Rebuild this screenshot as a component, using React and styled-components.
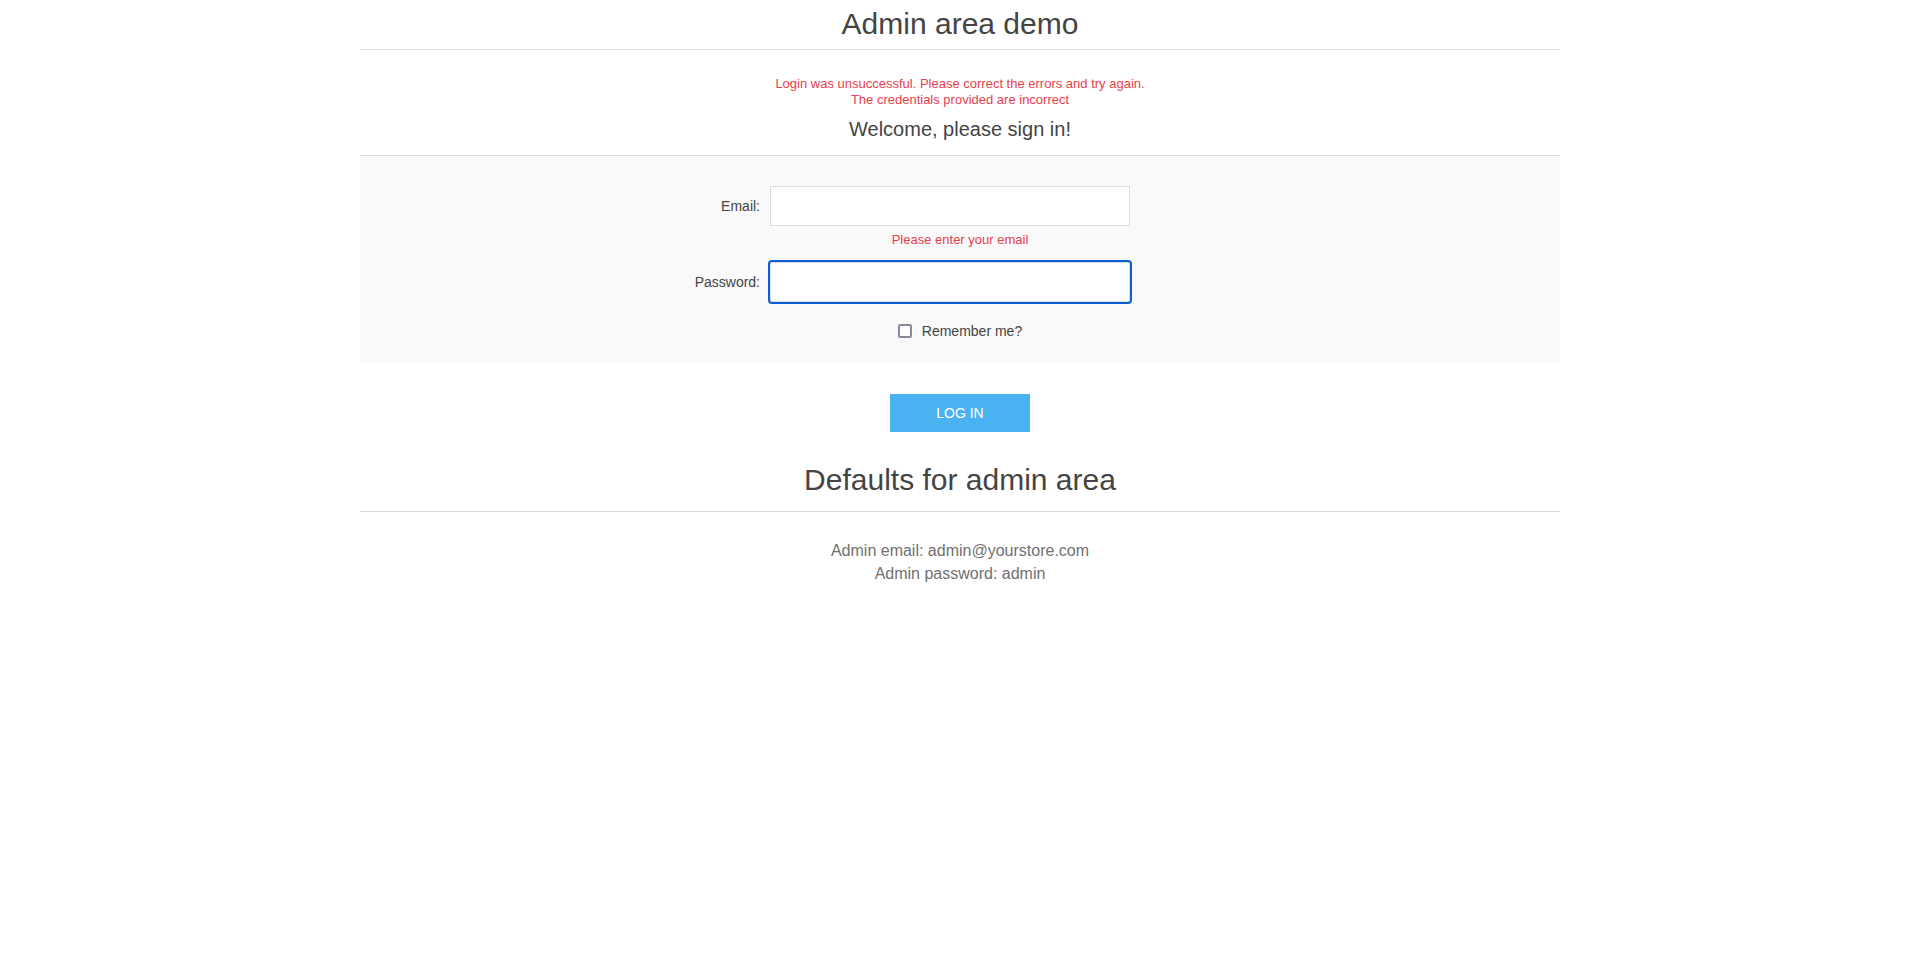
import React from "react";
import styled, { createGlobalStyle } from "styled-components";

const GlobalStyle = createGlobalStyle`
	body {
		margin: 0;
		background: #fff;
		font-family: "Liberation Sans", Arial, sans-serif;
		color: #444;
	}
`;

const Page = styled.div`
	width: 1200px;
	margin: 0 auto;
`;

const Title = styled.h1`
	margin: 0;
	padding: 7px 0 ${(p) => (p.$spaced ? "15px" : "9px")};
	margin-top: ${(p) => (p.$spaced ? "24px" : "0")};
	font-size: 30px;
	line-height: 33px;
	font-weight: normal;
	text-align: center;
	color: #444;
	border-bottom: 1px solid #ddd;
`;

const Errors = styled.div`
	margin-top: 26px;
	font-size: 13px;
	line-height: 16px;
	text-align: center;
	color: #e8404c;
`;

const Welcome = styled.div`
	margin-top: 10px;
	padding-bottom: 15px;
	font-size: 20px;
	line-height: 22px;
	text-align: center;
	color: #444;
	border-bottom: 1px solid #ddd;
`;

const Panel = styled.div`
	background: #f9f9f9;
	padding: 30px 0 23px;
`;

const FieldRow = styled.div`
	display: grid;
	grid-template-columns: 400px 360px;
	column-gap: 10px;
	align-items: center;
	margin-top: ${(p) => p.$top || 0}px;
`;

const Label = styled.label`
	font-size: 14px;
	text-align: right;
	color: #444;
`;

const Input = styled.input`
	box-sizing: border-box;
	width: 360px;
	height: 40px;
	padding: 0 10px;
	border: 1px solid #dcdcdc;
	background: #fff;
	font-family: inherit;
	font-size: 14px;
	outline: ${(p) => (p.$focused ? "2px solid #0c5fd3" : "none")};
	border-radius: ${(p) => (p.$focused ? "2px" : "0")};
`;

const FieldError = styled.div`
	margin-top: 6px;
	font-size: 13px;
	line-height: 16px;
	text-align: center;
	color: #e8404c;
`;

const CheckRow = styled.label`
	display: flex;
	justify-content: center;
	align-items: center;
	gap: 10px;
	margin-top: 20px;
	font-size: 14px;
	line-height: 18px;
	color: #444;
`;

const Check = styled.input`
	appearance: none;
	box-sizing: border-box;
	width: 14px;
	height: 14px;
	margin: 0;
	border: 2px solid #8a8899;
	border-radius: 2px;
	background: #fff;
`;

const ButtonRow = styled.div`
	display: flex;
	justify-content: center;
	margin-top: 31px;
`;

const LoginButton = styled.button`
	width: 140px;
	height: 38px;
	border: none;
	background: #4ab2f1;
	color: #fff;
	font-family: inherit;
	font-size: 14px;
	text-transform: uppercase;
	cursor: pointer;
`;

const Info = styled.div`
	margin-top: 27px;
	font-size: 16px;
	line-height: 23px;
	text-align: center;
	color: #707070;
`;

export default function App() {
	return (
		<>
			<GlobalStyle />
			<Page>
				<Title>Admin area demo</Title>
				<Errors>
					<div>Login was unsuccessful. Please correct the errors and try again.</div>
					<div>The credentials provided are incorrect</div>
				</Errors>
				<Welcome>Welcome, please sign in!</Welcome>
				<Panel>
					<FieldRow>
						<Label htmlFor="email">Email:</Label>
						<Input id="email" type="email" />
					</FieldRow>
					<FieldError>Please enter your email</FieldError>
					<FieldRow $top={14}>
						<Label htmlFor="password">Password:</Label>
						<Input id="password" type="password" $focused />
					</FieldRow>
					<CheckRow>
						<Check type="checkbox" />
						<span>Remember me?</span>
					</CheckRow>
				</Panel>
				<ButtonRow>
					<LoginButton>Log in</LoginButton>
				</ButtonRow>
				<Title $spaced>Defaults for admin area</Title>
				<Info>
					<div>Admin email: admin@yourstore.com</div>
					<div>Admin password: admin</div>
				</Info>
			</Page>
		</>
	);
}
